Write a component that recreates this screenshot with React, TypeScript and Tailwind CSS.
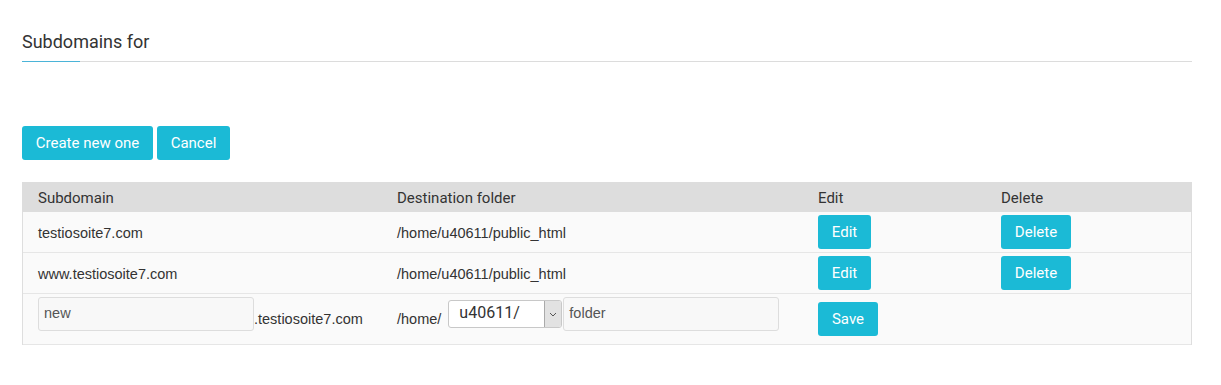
import React from "react";

const btn =
  "h-[34px] rounded-[3px] bg-[#1bbad6] text-white text-[15px] flex items-center justify-center pt-px font-['Roboto',sans-serif]";
const cell = "font-['Liberation_Sans',Arial,sans-serif] text-[14.5px] text-[#333]";
const cols = "grid grid-cols-[359px_420px_183px_1fr]";

function Row({ sub, dest }: { sub: string; dest: string }) {
  return (
    <div className={`${cols} h-[41px] border-b border-[#e6e6e6]`}>
      <div className={`pl-[15px] flex items-center pt-[3px] ${cell}`}>{sub}</div>
      <div className={`pl-[15px] flex items-center pt-[3px] ${cell}`}>{dest}</div>
      <div className="pl-4 pt-[3px]">
        <button className={`${btn} w-[53px]`}>Edit</button>
      </div>
      <div className="pl-4 pt-[3px]">
        <button className={`${btn} w-[70px]`}>Delete</button>
      </div>
    </div>
  );
}

export default function App() {
  return (
    <div className="w-[1221px] h-[385px] bg-white pl-[22px] pr-[29px] pt-[29px]">
      <div className="relative border-b border-[#dcdcdc] pb-[6px]">
        <h2 className="font-['Roboto',sans-serif] text-[18px] leading-[26px] text-[#333]">Subdomains for</h2>
        <div className="absolute left-0 bottom-[-1px] w-[58px] h-px bg-[#4bb4d8]" />
      </div>

      <div className="mt-[64px] flex gap-[4px]">
        <button className={`${btn} w-[131px]`}>Create new one</button>
        <button className={`${btn} w-[73px]`}>Cancel</button>
      </div>

      <div className="mt-[22px] border-x border-[#dedede]">
        <div className="grid grid-cols-[360px_420px_183px_1fr] h-[30px] bg-[#dddddd] font-['Roboto',sans-serif] text-[15px] text-[#333] -mx-px">
          <div className="pl-4 flex items-center pt-[2px]">Subdomain</div>
          <div className="pl-[15px] flex items-center pt-[2px]">Destination folder</div>
          <div className="pl-4 flex items-center pt-[2px]">Edit</div>
          <div className="pl-4 flex items-center pt-[2px]">Delete</div>
        </div>
        <div className="bg-[#fafafa]">
          <Row sub="testiosoite7.com" dest="/home/u40611/public_html" />
          <Row sub="www.testiosoite7.com" dest="/home/u40611/public_html" />
          <div className={`${cols} h-[51px] border-b border-[#e6e6e6]`}>
            <div className={`pl-[15px] flex items-center pt-[2px] ${cell}`}>
              <div className="self-start mt-[1px] w-[216px] h-[34px] rounded-[3px] border border-[#dddddd] bg-[#f8f8f8] px-[5px] flex items-center text-[#555]">
                new
              </div>
              <span>.testiosoite7.com</span>
            </div>
            <div className={`pl-[15px] flex items-center pt-[2px] ${cell}`}>
              <span className="mr-[7px]">/home/</span>
              <div className="self-start mt-[4px] w-[114px] h-[28px] rounded-[3px] border border-[#c8c8c8] bg-white flex overflow-hidden">
                <div className="flex-1 flex items-center pl-[10px] pb-[3px] font-['Roboto',sans-serif] text-[16px] text-[#333]">u40611/</div>
                <div className="w-[17px] border-l border-[#aaaaaa] bg-[#e2e2e2] flex items-center justify-center">
                  <svg width="8" height="5" viewBox="0 0 8 5" fill="none">
                    <path d="M1 1l3 3 3-3" stroke="#555" strokeWidth="1" />
                  </svg>
                </div>
              </div>
              <div className="self-start mt-[1px] ml-px w-[216px] h-[34px] rounded-[3px] border border-[#dddddd] bg-[#f8f8f8] px-[5px] flex items-center text-[#555]">
                folder
              </div>
            </div>
            <div className="pl-4 pt-[8px]">
              <button className={`${btn} w-[60px]`}>Save</button>
            </div>
            <div />
          </div>
        </div>
      </div>
    </div>
  );
}
